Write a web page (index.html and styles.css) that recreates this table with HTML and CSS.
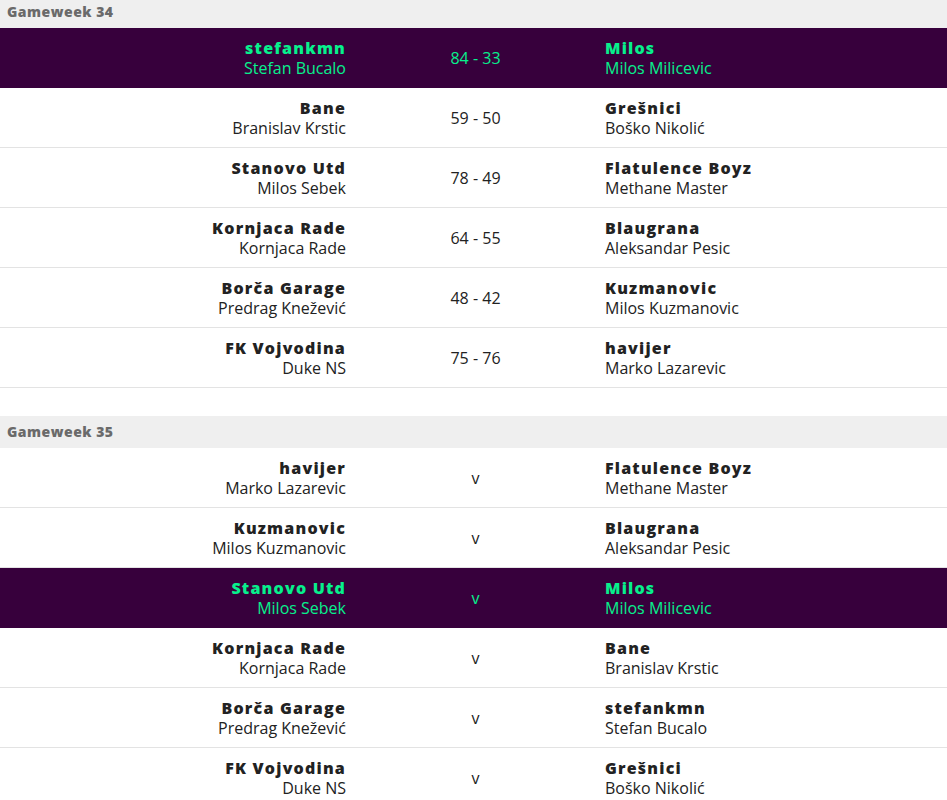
FILE: index.html
```html
<!DOCTYPE html>
<html lang="sr">
<head>
<meta charset="utf-8">
<title>Fixtures</title>
<link rel="stylesheet" href="styles.css">
</head>
<body>
<div class="fixtures">
  <section class="gameweek">
    <h2 class="gw-title">Gameweek 34</h2>
    <ul class="matches">
      <li class="match is-mine">
        <div class="team home"><span class="team-name">stefankmn</span><span class="manager">Stefan Bucalo</span></div>
        <div class="score">84 - 33</div>
        <div class="team away"><span class="team-name">Milos</span><span class="manager">Milos Milicevic</span></div>
      </li>
      <li class="match">
        <div class="team home"><span class="team-name">Bane</span><span class="manager">Branislav Krstic</span></div>
        <div class="score">59 - 50</div>
        <div class="team away"><span class="team-name">Grešnici</span><span class="manager">Boško Nikolić</span></div>
      </li>
      <li class="match">
        <div class="team home"><span class="team-name">Stanovo Utd</span><span class="manager">Milos Sebek</span></div>
        <div class="score">78 - 49</div>
        <div class="team away"><span class="team-name">Flatulence Boyz</span><span class="manager">Methane Master</span></div>
      </li>
      <li class="match">
        <div class="team home"><span class="team-name">Kornjaca Rade</span><span class="manager">Kornjaca Rade</span></div>
        <div class="score">64 - 55</div>
        <div class="team away"><span class="team-name">Blaugrana</span><span class="manager">Aleksandar Pesic</span></div>
      </li>
      <li class="match">
        <div class="team home"><span class="team-name">Borča Garage</span><span class="manager">Predrag Knežević</span></div>
        <div class="score">48 - 42</div>
        <div class="team away"><span class="team-name">Kuzmanovic</span><span class="manager">Milos Kuzmanovic</span></div>
      </li>
      <li class="match">
        <div class="team home"><span class="team-name">FK Vojvodina</span><span class="manager">Duke NS</span></div>
        <div class="score">75 - 76</div>
        <div class="team away"><span class="team-name">havijer</span><span class="manager">Marko Lazarevic</span></div>
      </li>
    </ul>
  </section>
  <section class="gameweek">
    <h2 class="gw-title">Gameweek 35</h2>
    <ul class="matches">
      <li class="match">
        <div class="team home"><span class="team-name">havijer</span><span class="manager">Marko Lazarevic</span></div>
        <div class="score">v</div>
        <div class="team away"><span class="team-name">Flatulence Boyz</span><span class="manager">Methane Master</span></div>
      </li>
      <li class="match">
        <div class="team home"><span class="team-name">Kuzmanovic</span><span class="manager">Milos Kuzmanovic</span></div>
        <div class="score">v</div>
        <div class="team away"><span class="team-name">Blaugrana</span><span class="manager">Aleksandar Pesic</span></div>
      </li>
      <li class="match is-mine">
        <div class="team home"><span class="team-name">Stanovo Utd</span><span class="manager">Milos Sebek</span></div>
        <div class="score">v</div>
        <div class="team away"><span class="team-name">Milos</span><span class="manager">Milos Milicevic</span></div>
      </li>
      <li class="match">
        <div class="team home"><span class="team-name">Kornjaca Rade</span><span class="manager">Kornjaca Rade</span></div>
        <div class="score">v</div>
        <div class="team away"><span class="team-name">Bane</span><span class="manager">Branislav Krstic</span></div>
      </li>
      <li class="match">
        <div class="team home"><span class="team-name">Borča Garage</span><span class="manager">Predrag Knežević</span></div>
        <div class="score">v</div>
        <div class="team away"><span class="team-name">stefankmn</span><span class="manager">Stefan Bucalo</span></div>
      </li>
      <li class="match">
        <div class="team home"><span class="team-name">FK Vojvodina</span><span class="manager">Duke NS</span></div>
        <div class="score">v</div>
        <div class="team away"><span class="team-name">Grešnici</span><span class="manager">Boško Nikolić</span></div>
      </li>
    </ul>
  </section>
</div>
</body>
</html>
```

FILE: styles.css
```css
html, body {
  margin: 0;
  padding: 0;
  background: #ffffff;
}

body {
  font-family: "Open Sans", "Noto Sans", "Liberation Sans", sans-serif;
  color: #222222;
}

.fixtures {
  margin-top: -4px;
}

.gameweek + .gameweek {
  margin-top: 28px;
}

.gw-title {
  margin: 0;
  height: 32px;
  box-sizing: border-box;
  padding: 6px 7px;
  background: #efefef;
  color: #6a6a6a;
  font-size: 14px;
  line-height: 20px;
  font-weight: 800;
  letter-spacing: 0.5px;
}

.matches {
  list-style: none;
  margin: 0;
  padding: 0;
}

.match {
  display: grid;
  grid-template-columns: 346px 259px 1fr;
  align-items: center;
  height: 60px;
  box-sizing: border-box;
  border-bottom: 1px solid #e3e3e3;
}

.match.is-mine {
  background: #37003c;
  color: #07f08c;
  border-bottom-color: #37003c;
}

.team {
  display: flex;
  flex-direction: column;
  line-height: 20px;
  font-size: 16px;
}

.team.home {
  align-items: flex-end;
  text-align: right;
}

.team.away {
  align-items: flex-start;
  text-align: left;
}

.team-name {
  font-weight: 800;
  letter-spacing: 1.2px;
}

.manager {
  font-weight: 400;
  letter-spacing: 0;
}

.score {
  text-align: center;
  font-size: 16px;
  line-height: 20px;
}
```
